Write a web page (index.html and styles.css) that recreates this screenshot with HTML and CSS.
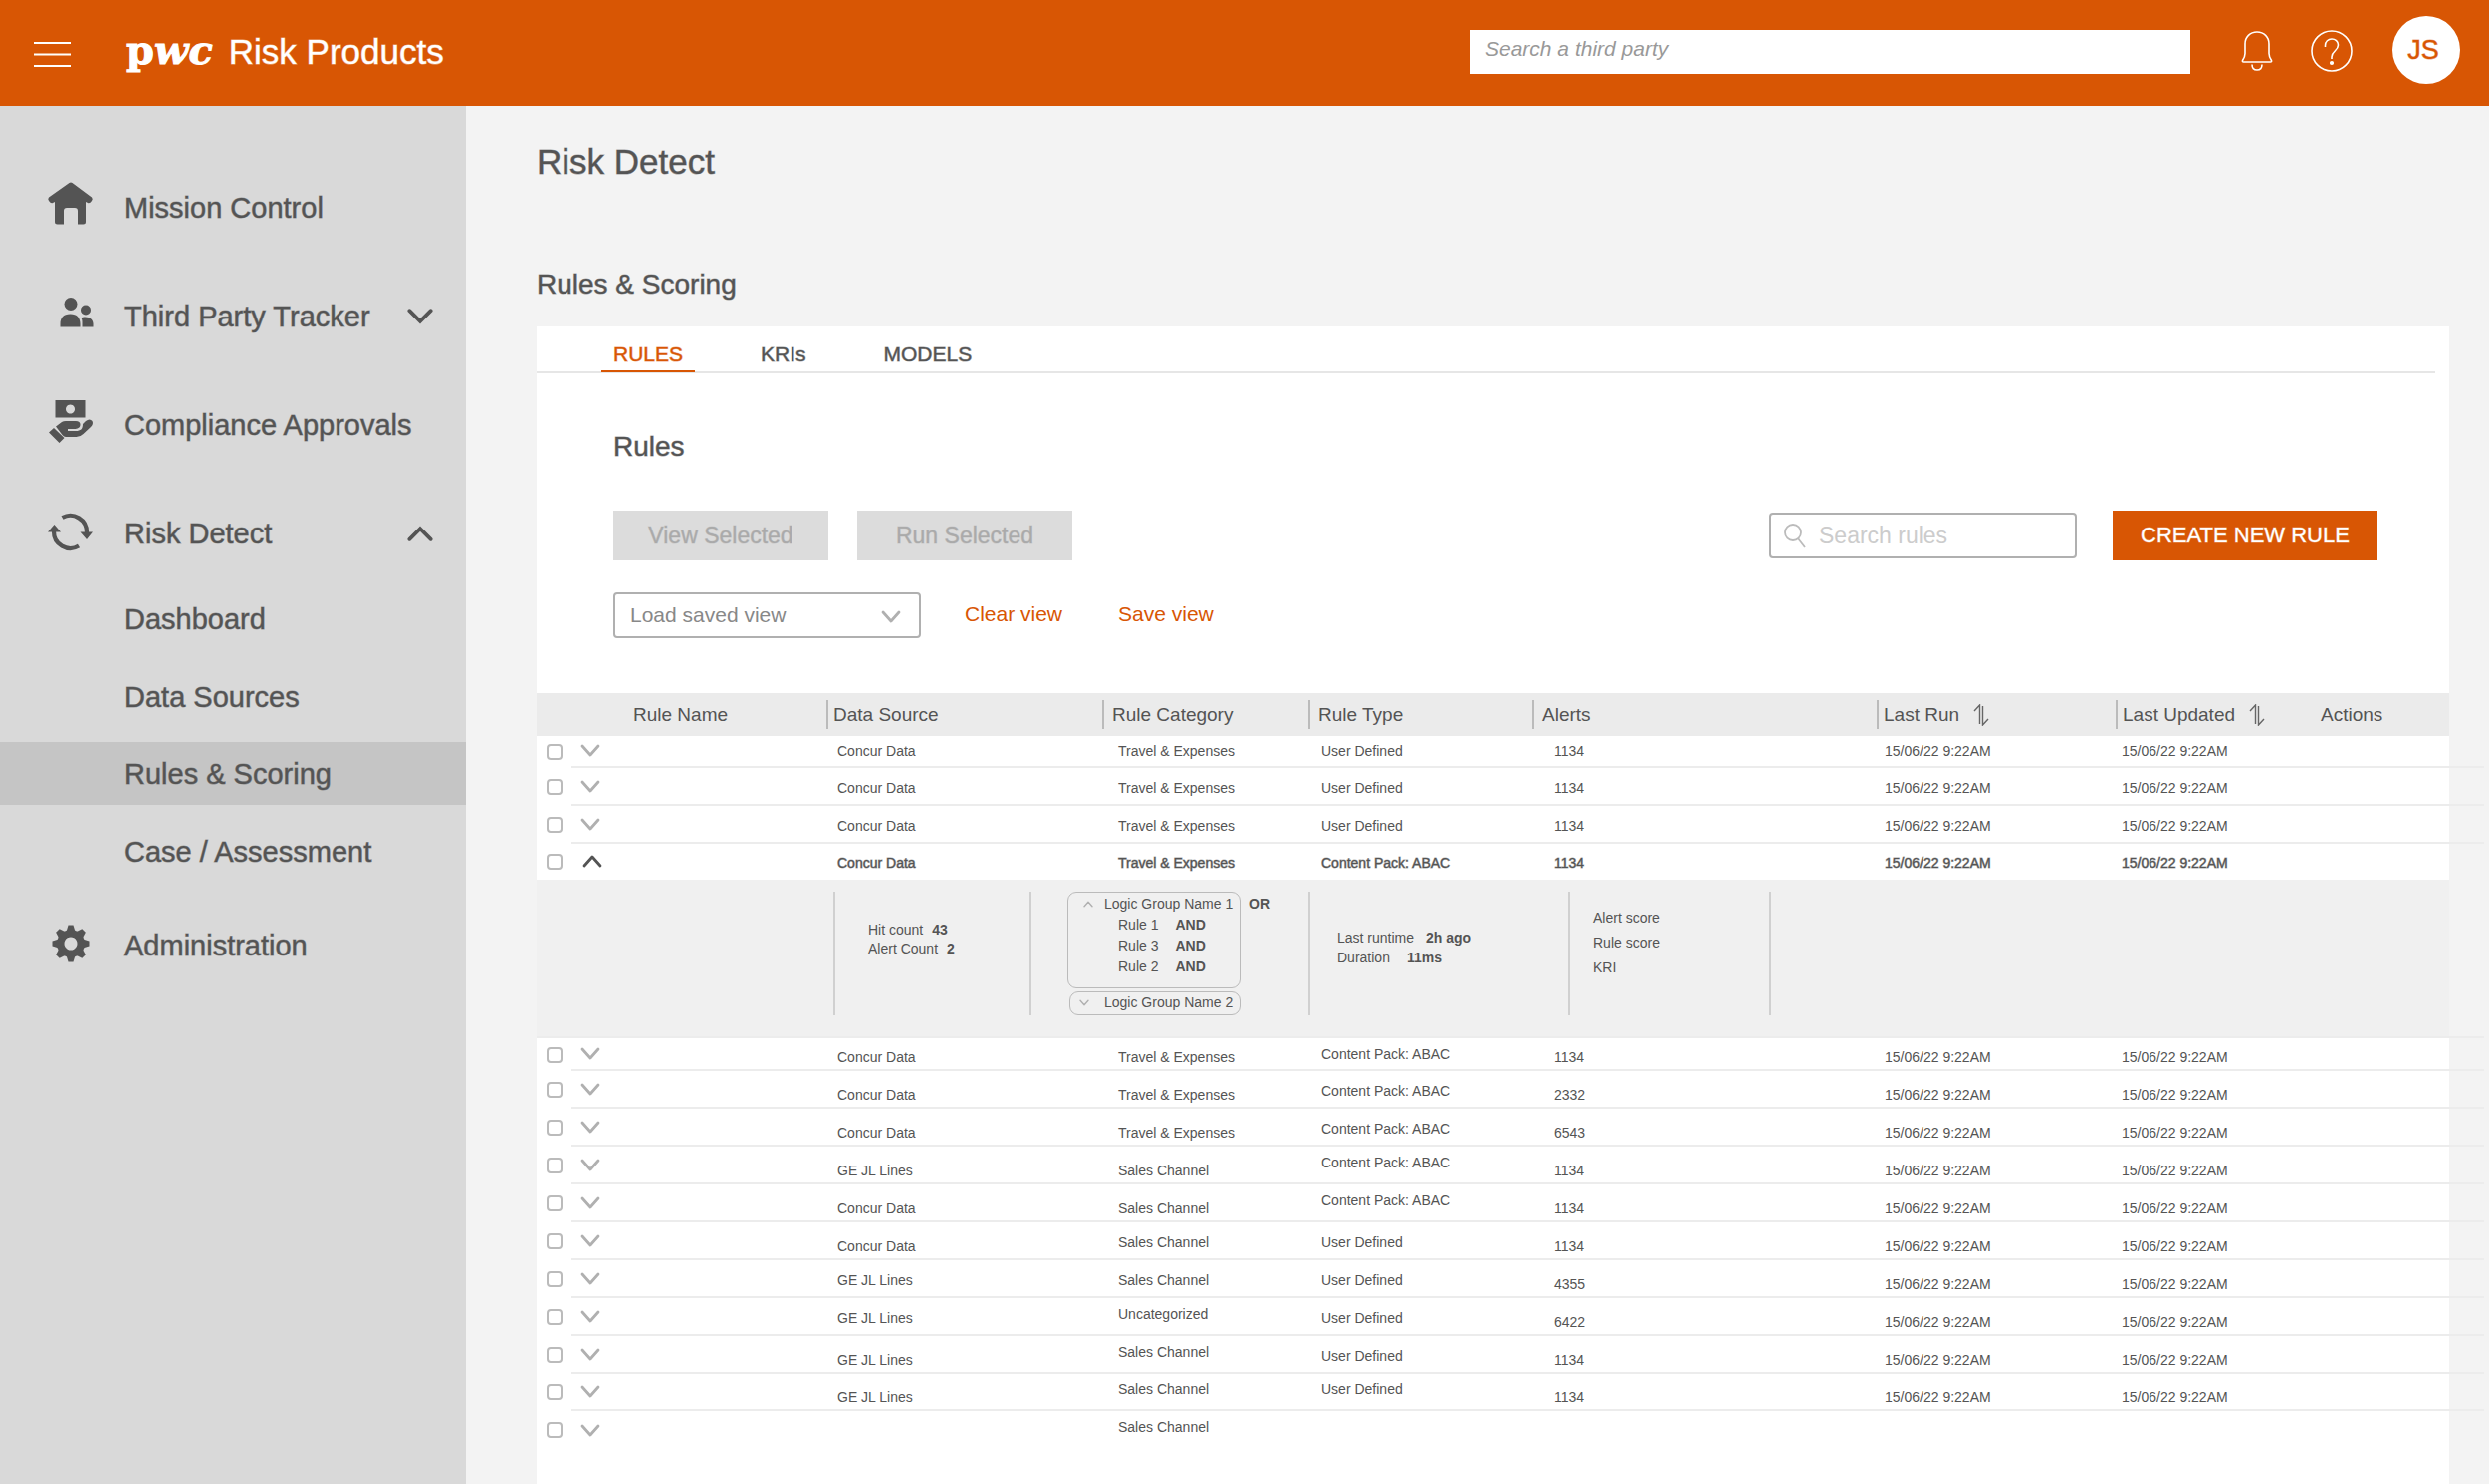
FILE: index.html
```html
<!DOCTYPE html>
<html lang="en">
<head>
<meta charset="utf-8">
<meta name="viewport" content="width=device-width, initial-scale=1">
<title>Risk Detect - Rules &amp; Scoring</title>
<link rel="stylesheet" href="styles.css">
</head>
<body>
<svg class="sprite" aria-hidden="true">
  <symbol id="down" viewBox="0 0 20 13"><path d="M2 2l8 9 8-9" fill="none" stroke="currentColor" stroke-width="2.8" stroke-linecap="round" stroke-linejoin="round"/></symbol>
  <symbol id="up" viewBox="0 0 20 13"><path d="M2 11l8-9 8 9" fill="none" stroke="currentColor" stroke-width="2.8" stroke-linecap="round" stroke-linejoin="round"/></symbol>
  <symbol id="sort" viewBox="0 0 16 22"><path d="M1 7L6.500 1V20M15 15L9.500 21V2" fill="none" stroke="#666" stroke-width="1.400"/></symbol>
</svg>

<header class="topbar">
  <button class="icon-button menu" aria-label="Menu">
    <svg width="37" height="26" viewBox="0 0 37 26"><path d="M0 1h37M0 12.500h37M0 24h37" stroke="#fff" stroke-width="2"/></svg>
  </button>
  <a class="brand" href="#"><span class="logo">p<i>wc</i></span><span class="product medium">Risk Products</span></a>
  <input class="party-search" type="search" placeholder="Search a third party" aria-label="Search a third party">
  <button class="icon-button bell" aria-label="Notifications">
    <svg width="32" height="40" viewBox="0 0 32 40" fill="none" stroke="#fff" stroke-width="1.600"><path d="M1.500 29.500c2-3 2.500-4 2.500-7V13C4 6 9 1 16 1s12 5 12 12v9.500c0 3 .5 4 2.500 7q.5 1.500-1 1.500h-27q-1.500 0-1-1.500z" stroke-linejoin="round"/><path d="M11 33.500c0 3.500 2 5.500 5 5.500s5-2 5-5.500"/></svg>
  </button>
  <button class="icon-button help" aria-label="Help">
    <svg width="42" height="42" viewBox="0 0 42 42" fill="none" stroke="#fff" stroke-width="1.600"><circle cx="21" cy="21" r="20"/><path d="M14.500 17v-1.500c0-4 3-6.500 6.500-6.500s6.500 2.500 6.500 6c0 6-6.500 6-6.500 12v2"/><circle cx="21" cy="33" r="1.300" fill="#fff"/></svg>
  </button>
  <button class="avatar medium" aria-label="Account JS">JS</button>
</header>

<div class="layout">
  <nav class="sidebar medium" aria-label="Main">
    <a class="nav-item" href="#">
      <svg class="nav-icon" viewBox="0 0 48 48"><path d="M22.500 3q1.500-1 3 0L45 17.500q1.500 1.500 0 3.500-2 3-4 2l-2-1v20q0 2.500-2.500 2.500H31V31q0-3-3-3h-8q-3 0-3 3v13.500h-6.500Q8 44.500 8 42V22l-2 1q-2 1-4-2-1.500-2 0-3.500z" fill="currentColor"/></svg>
      Mission Control
    </a>
    <a class="nav-item" href="#">
      <svg class="nav-icon" viewBox="0 0 48 48" fill="currentColor"><circle cx="24" cy="15.500" r="6.500"/><circle cx="39" cy="21.500" r="5"/><path d="M13.500 38.500v-3c0-6 3-10 10-10s10 4 10 10v3zM35.500 38.500v-4c0-2 0-3-1-5 1-1 2-1 4-1 5 0 8 3 8 7v3z"/></svg>
      Third Party Tracker
      <svg class="nav-arrow" viewBox="0 0 24 15"><path d="M2 2l10 10L22 2" fill="none" stroke="currentColor" stroke-width="3.500" stroke-linecap="round"/></svg>
    </a>
    <a class="nav-item" href="#">
      <svg class="nav-icon" viewBox="0 0 48 48" fill="currentColor"><path fill-rule="evenodd" d="M8.500 3h30v17.500h-30zM23.500 7.500a4.500 4.500 0 1 0 .01 0z"/><path d="M2 35.500l5-4.500 10.500 10-5 5zM9 29.500l6-4.500q1.500-1 4-1h10c3 0 4.500 1.500 4.500 3.500 0 3.500-3 4.500-6 4.500h-6.500v2H29c5 0 7-2 7-7l3-3q4-3 6.500 0 1.500 3-1.500 6l-7.500 7q-3 3-7 3H19q-2 0-3.500-2z"/></svg>
      Compliance Approvals
    </a>
    <a class="nav-item has-children" href="#">
      <svg class="nav-icon" viewBox="0 0 48 48"><path d="M15.500 12A16.500 16.500 0 0 1 40 27M32 40.500A16.500 16.500 0 0 1 7 26" fill="none" stroke="currentColor" stroke-width="4.200"/><path d="M33.500 26.500H46L40 34zM1 26.500h13L7.500 19z" fill="currentColor"/></svg>
      Risk Detect
      <svg class="nav-arrow" viewBox="0 0 24 15"><path d="M2 13L12 3l10 10" fill="none" stroke="currentColor" stroke-width="3.500" stroke-linecap="round"/></svg>
    </a>
    <div class="subnav">
      <a class="nav-item" href="#">Dashboard</a>
      <a class="nav-item" href="#">Data Sources</a>
      <a class="nav-item current" href="#" aria-current="page">Rules &amp; Scoring</a>
      <a class="nav-item" href="#">Case / Assessment</a>
    </div>
    <a class="nav-item" href="#">
      <svg class="nav-icon" viewBox="0 -3 48 48"><g fill="currentColor"><path fill-rule="evenodd" d="M24 9a14 14 0 1 0 .01 0zM24 16.500a6.500 6.500 0 1 1-.01 0z"/><path id="tooth" d="M19.500 11l2-6.500h5l2 6.500z"/><use href="#tooth" transform="rotate(45 24 23)"/><use href="#tooth" transform="rotate(90 24 23)"/><use href="#tooth" transform="rotate(135 24 23)"/><use href="#tooth" transform="rotate(180 24 23)"/><use href="#tooth" transform="rotate(225 24 23)"/><use href="#tooth" transform="rotate(270 24 23)"/><use href="#tooth" transform="rotate(315 24 23)"/></g></svg>
      Administration
    </a>
  </nav>

  <main class="content">
    <h1 class="medium">Risk Detect</h1>
    <h2 class="medium">Rules &amp; Scoring</h2>
    <section class="panel">
      <div class="tabs medium" role="tablist">
        <button class="tab active" role="tab" aria-selected="true">RULES</button>
        <button class="tab" role="tab" aria-selected="false">KRIs</button>
        <button class="tab" role="tab" aria-selected="false">MODELS</button>
      </div>
      <div class="tools">
        <h3 class="medium">Rules</h3>
        <div class="tool-row">
          <button class="button medium" disabled>View Selected</button>
          <button class="button medium" disabled>Run Selected</button>
          <label class="rule-search">
            <svg width="22" height="25" viewBox="0 0 22 25" fill="none" stroke="#bbb" stroke-width="1.800"><circle cx="9" cy="9" r="8"/><path d="M14 15l7 9"/></svg>
            <input type="search" placeholder="Search rules" aria-label="Search rules">
          </label>
          <button class="button primary medium">CREATE NEW RULE</button>
        </div>
        <div class="tool-row views">
          <div class="saved-view">
            <select aria-label="Load saved view"><option>Load saved view</option></select>
            <svg class="select-arrow" width="20" height="13"><use href="#down"/></svg>
          </div>
          <a href="#">Clear view</a>
          <a href="#">Save view</a>
        </div>
      </div>

      <table class="rules">
        <colgroup><col class="w-check"><col class="w-toggle"><col class="w-name"><col class="w-source"><col class="w-category"><col class="w-type"><col><col class="w-run"><col class="w-updated"><col class="w-actions"><col class="w-check"></colgroup>
        <thead>
          <tr>
            <td></td><td></td>
            <th scope="col"><span>Rule Name</span></th>
            <th scope="col" class="ruled"><span>Data Source</span></th>
            <th scope="col" class="ruled wide"><span>Rule Category</span></th>
            <th scope="col" class="ruled wide"><span>Rule Type</span></th>
            <th scope="col" class="ruled wide"><span>Alerts</span></th>
            <th scope="col" class="ruled"><span>Last Run <svg class="sort" width="16" height="22"><use href="#sort"/></svg></span></th>
            <th scope="col" class="ruled"><span>Last Updated <svg class="sort" width="16" height="22"><use href="#sort"/></svg></span></th>
            <th scope="col"><span>Actions</span></th>
            <td class="outside"></td>
          </tr>
        </thead>
        <tbody id="rule-rows"></tbody>
      </table>
    </section>
  </main>
</div>

<template id="detail">
  <tr class="detail">
    <td colspan="10">
      <div class="detail-grid">
        <div></div>
        <dl class="counts"><div><dt>Hit count</dt><dd>43</dd></div><div><dt>Alert Count</dt><dd>2</dd></div></dl>
        <div class="logic">
          <div class="groups">
            <div class="group">
              <button class="group-title"><svg width="10" height="7"><use href="#up"/></svg>Logic Group Name 1</button>
              <div class="clause"><span>Rule 1</span><b>AND</b></div>
              <div class="clause"><span>Rule 3</span><b>AND</b></div>
              <div class="clause"><span>Rule 2</span><b>AND</b></div>
            </div>
            <div class="group closed">
              <button class="group-title"><svg width="10" height="7"><use href="#down"/></svg>Logic Group Name 2</button>
            </div>
          </div>
          <b class="or">OR</b>
        </div>
        <dl class="runtime"><div><dt>Last runtime</dt><dd>2h ago</dd></div><div><dt>Duration</dt><dd>11ms</dd></div></dl>
        <ul class="scores"><li>Alert score</li><li>Rule score</li><li>KRI</li></ul>
        <div></div>
      </div>
    </td>
    <td></td>
  </tr>
</template>
<script src="rules.js"></script>
</body>
</html>
```
FILE: rules.js
```js
// source, category, type, alerts, vertical alignment of the four values and the dates
const T = "Travel & Expenses", S = "Sales Channel", C = "Concur Data", G = "GE JL Lines";
const U = "User Defined", P = "Content Pack: ABAC";
const rows = [
  [C, T, U, "1134", "tttt"],
  [C, T, U, "1134", "mmmm"],
  [C, T, U, "1134", "mmmm"],
  [C, T, P, "1134", "mmmm"],
  [C, T, P, "1134", "bbtb"],
  [C, T, P, "2332", "bbmb"],
  [C, T, P, "6543", "bbmb"],
  [G, S, P, "1134", "bbtb"],
  [C, S, P, "1134", "bbtb"],
  [C, S, U, "1134", "bmmb"],
  [G, S, U, "4355", "mmmb"],
  [G, "Uncategorized", U, "6422", "mtmb"],
  [G, S, U, "1134", "btmb"],
  [G, S, U, "1134", "bttb"],
  ["", S, "", "", "ttbb"]
];
const names = { t: "top", m: "middle", b: "bottom" };
const body = document.getElementById("rule-rows");
const date = "15/06/22 9:22AM";

rows.forEach((row, i) => {
  const tr = document.createElement("tr");
  const open = i === 3;
  if (open) tr.className = "open medium";
  if (i === 0 || i === 4) tr.className = "short";
  const add = (cls, content) => {
    const td = document.createElement("td");
    td.className = cls;
    if (content) td.innerHTML = content;
    tr.append(td);
  };
  add("check", `<input type="checkbox" aria-label="Select rule ${i + 1}">`);
  add("toggle", `<button aria-label="Details" aria-expanded="${open}"><svg width="20" height="13"><use href="#${open ? "up" : "down"}"/></svg></button>`);
  add("name");
  ["source", "category", "type", "alerts"].forEach((cls, n) =>
    add(cls + " " + names[row[4][n]], row[n].replace("&", "&amp;")));
  const shown = row[0] ? date : "";
  add("run " + names[row[4][3]], shown);
  add("updated " + names[row[4][3]], shown);
  add("actions");
  add("outside");
  body.append(tr);
  if (open) body.append(document.getElementById("detail").content.cloneNode(true));
});
```
FILE: styles.css
```css
:root {
  --orange: #d85604;
  --text: #545454;
  --line: #ececec;
  --muted: #b0b0b0;
}

* { box-sizing: border-box; }

body {
  margin: 0;
  min-height: 100vh;
  display: flex;
  flex-direction: column;
  background: #f3f3f3;
  color: var(--text);
  font-family: "Liberation Sans", Arial, sans-serif;
  font-size: 14px;
  line-height: 16px;
}

button, input, select { font: inherit; color: inherit; }
button { background: none; border: 0; padding: 0; cursor: pointer; }
a { color: inherit; text-decoration: none; }
svg { display: block; }
dl, dd, ul { margin: 0; padding: 0; }
.sprite { position: absolute; width: 0; height: 0; }

/* half-tone outline gives the text a weight between regular and bold */
.medium { -webkit-text-stroke: 1px rgba(84, 84, 84, 0.5); }

/* top bar */
.topbar {
  height: 106px;
  display: flex;
  align-items: center;
  padding: 0 29px 6px 34px;
  background: var(--orange);
  color: #fff;
}
.menu { padding-top: 9px; }
.brand { display: flex; align-items: baseline; gap: 16px; margin: 2px auto 0 56px; font-size: 35px; line-height: 40px; }
.logo { font: bold 40px/40px "DejaVu Serif", serif; -webkit-text-stroke: 1px #fff; }
.product { -webkit-text-stroke-color: rgba(255, 255, 255, 0.5); }
.party-search {
  width: 724px;
  height: 44px;
  margin: 3px 51px 0 0;
  padding: 0 16px 6px;
  border: 0;
  border-radius: 0;
  background: #fff;
  color: var(--text);
  font-size: 21px;
  font-style: italic;
}
.party-search::placeholder { color: #999; }
.icon-button { padding-top: 2px; }
.icon-button.menu { padding-top: 9px; }
.bell { margin-right: 38px; }
.help { margin-right: 40px; }
.avatar {
  width: 68px;
  height: 68px;
  padding-right: 6px;
  border-radius: 50%;
  background: #fff;
  color: var(--orange);
  font-size: 27px;
  -webkit-text-stroke-color: rgba(216, 86, 4, 0.5);
}

/* layout */
.layout { flex: 1; display: flex; }
.sidebar { flex: 0 0 468px; padding-top: 71px; background: #d9d9d9; font-size: 29px; line-height: 32px; }
.content { flex: 1; min-width: 0; display: flex; flex-direction: column; padding: 36px 40px 0 71px; }

.nav-item { display: flex; align-items: center; height: 63px; margin-bottom: 46px; padding: 0 33px 0 47px; }
.nav-icon { width: 48px; height: 48px; margin: 0 30px 8px 0; }
.nav-arrow { width: 26px; height: 16px; margin-left: auto; }
.has-children { margin-bottom: 23px; }
.subnav { margin-bottom: 31px; }
.subnav .nav-item { margin-bottom: 15px; padding-left: 125px; }
.subnav .current { background: #c5c5c5; }

h1, h2, h3 { margin: 0; font-weight: normal; }
h1 { font-size: 35px; line-height: 42px; }
h2 { margin-top: 84px; font-size: 28px; line-height: 36px; }
h3 { font-size: 28px; line-height: 36px; }

.panel { flex: 1; margin-top: 24px; background: #fff; }
.tabs { display: flex; gap: 54px; margin-right: 14px; padding: 8px 0 0 65px; border-bottom: 2px solid #e6e6e6; font-size: 21px; }
.tab { height: 38px; margin-bottom: -1px; padding: 4px 12px 0; border-bottom: 2px solid transparent; -webkit-text-stroke: inherit; }
.tab.active { color: var(--orange); border-color: var(--orange); -webkit-text-stroke-color: rgba(216, 86, 4, 0.5); }

.tools { padding: 56px 72px 55px 77px; }
.tool-row { display: flex; align-items: center; gap: 29px; margin-top: 46px; }
.button { width: 216px; height: 50px; background: #dcdcdc; color: #aaa; font-size: 23px; -webkit-text-stroke-color: rgba(170, 170, 170, 0.4); }
.button.primary { width: 266px; margin-left: 7px; background: var(--orange); color: #fff; font-size: 22px; -webkit-text-stroke-color: rgba(255, 255, 255, 0.4); }
.rule-search, .saved-view { width: 309px; height: 46px; border: 2px solid var(--muted); border-radius: 4px; background: #fff; }
.rule-search { display: flex; align-items: center; gap: 13px; margin-left: auto; padding: 0 13px; }
.rule-search input { flex: 1; min-width: 0; padding: 0; border: 0; outline: 0; background: none; font-size: 23px; }
.rule-search input::placeholder { color: #ccc; }
.views { gap: 56px; margin-top: 32px; color: var(--orange); font-size: 21px; }
.views a { padding-bottom: 3px; }
.saved-view { position: relative; margin-right: -12px; color: #888; }
.saved-view select { width: 100%; height: 100%; padding: 0 15px; border: 0; background: none; appearance: none; }
.select-arrow { position: absolute; right: 18px; top: 16px; color: var(--muted); pointer-events: none; }

/* rules table: row lines run past the panel's right edge */
.rules { width: calc(100% + 35px); border-collapse: separate; border-spacing: 0; table-layout: fixed; }
.w-check { width: 35px; }
.w-toggle { width: 62px; }
.w-name { width: 194px; }
.w-source { width: 277px; }
.w-category { width: 207px; }
.w-type { width: 225px; }
.w-run { width: 240px; }
.w-updated { width: 206px; }
.w-actions { width: 129px; }

th, td { padding: 0; text-align: left; font-weight: normal; }
thead td, thead th { height: 43px; background: #ebebeb; }
thead .outside { background: none; }
th span { display: flex; align-items: center; gap: 14px; height: 29px; font-size: 19px; }
th.ruled span { border-left: 2px solid #bbb; padding-left: 5px; }
th.wide span { padding-left: 8px; }

tbody td { height: 38px; padding: 8px 0 4px; border-bottom: 2px solid var(--line); white-space: nowrap; }
tbody .short td { height: 33px; }
tbody .open td { height: 36px; border-color: transparent; }
tbody .check { padding: 0 0 0 10px; border: 0; }
tbody .toggle { padding: 0 0 0 9px; color: var(--muted); }
tbody .open .toggle { padding-left: 11px; color: var(--text); }
tbody tr:last-child td { border: 0; }
tbody .source { padding-left: 11px; }
tbody .category { padding-left: 16px; }
tbody .type { padding-left: 13px; }
tbody .alerts { padding-left: 22px; }
tbody .run { padding-left: 8px; }
tbody .updated { padding-left: 6px; }
.top { vertical-align: top; }
.middle { vertical-align: middle; }
.bottom { vertical-align: bottom; }
.toggle button { display: block; }

input[type="checkbox"] {
  display: block;
  width: 16px;
  height: 16px;
  margin: 0;
  appearance: none;
  border: 2px solid #bbb;
  border-radius: 4px;
  background: #fff;
}

/* expanded rule */
tbody .detail td { height: 159px; padding: 0; background: #f0f0f0; vertical-align: top; }
tbody .detail td:last-child { background: none; }
.detail-grid { display: grid; grid-template-columns: 298px 197px 280px 261px 202px 1fr; height: 124px; margin-top: 12px; }
.detail-grid > * + * { border-left: 2px solid #d0d0d0; }
.counts, .runtime { display: flex; flex-direction: column; justify-content: center; }
.counts { padding: 0 0 28px 33px; line-height: 19px; }
.runtime { padding: 0 0 12px 27px; line-height: 20px; }
.counts div, .runtime div { display: flex; gap: 9px; }
.runtime div { gap: 12px; }
.runtime div + div { gap: 17px; }
dd { font-weight: bold; }
.scores { padding: 14px 0 0 23px; line-height: 25px; list-style: none; }
.logic { display: flex; gap: 9px; padding-left: 36px; }
.groups { width: 174px; display: flex; flex-direction: column; gap: 3px; }
.group { height: 97px; padding-top: 1px; border: 1px solid #bbb; border-radius: 9px; line-height: 21px; }
.group.closed { height: 24px; margin-left: 2px; padding: 0; }
.group-title { display: flex; align-items: center; gap: 11px; padding-left: 15px; line-height: 21px; }
.group-title svg { color: var(--muted); }
.closed .group-title { gap: 15px; padding-left: 9px; }
.clause { display: flex; gap: 17px; padding-left: 50px; }
.or { padding-top: 2px; line-height: 21px; }
```
